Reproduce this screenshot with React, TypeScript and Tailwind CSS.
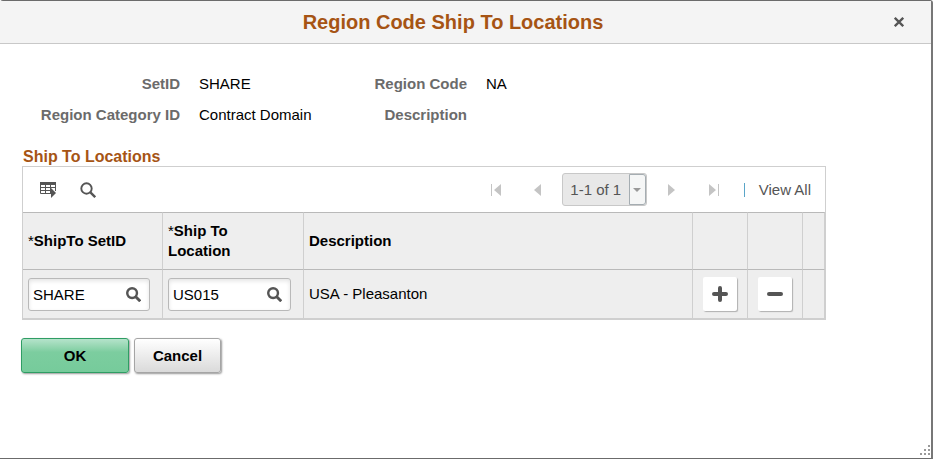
import type { ReactNode } from "react";

const fields = [
  { label: "SetID", value: "SHARE" },
  { label: "Region Code", value: "NA" },
  { label: "Region Category ID", value: "Contract Domain" },
  { label: "Description", value: "" }
];

function SearchIcon({ className, weight }: { className: string; weight: number }) {
  return (
    <svg className={className} viewBox="0 0 16 16" fill="none" stroke="#555" aria-hidden="true">
      <circle cx="6.5" cy="6.5" r="5.2" strokeWidth={weight} />
      <path d="M10.4 10.4 15.2 15.2" strokeWidth={weight + 0.5} />
    </svg>
  );
}

function GridActionIcon() {
  return (
    <svg className="h-4 w-4.5" viewBox="0 0 18 16" aria-hidden="true">
      <path d="M0 0h16v3H0z" fill="#555" />
      <path d="M.5 2v9.5H10M.5 5.5h15M.5 8.5H11M5.5 3v9M10.5 3v9M15.5 3v6" stroke="#555" fill="none" />
      <path d="M11 6v10l5-5z" fill="#555" />
    </svg>
  );
}

function PagerButton({ label, className, children }: { label: string; className: string; children: ReactNode }) {
  return (
    <button type="button" aria-label={label} className={`flex h-8 shrink-0 items-center justify-center ${className}`}>
      <svg className="h-3.5 w-3" viewBox="0 0 12 14" fill="#c4c4c4" aria-hidden="true">
        {children}
      </svg>
    </button>
  );
}

function LookupField({ id, label, value }: { id: string; label: string; value: string }) {
  return (
    <div className="flex h-[33px] items-center rounded-[3px] border border-[#b9b9b9] bg-white pr-2 shadow-[inset_0_2px_4px_#e4e4e4]">
      <input
        id={id}
        aria-label={label}
        defaultValue={value}
        className="h-full min-w-0 flex-1 bg-transparent pl-1 text-black outline-none"
      />
      <button type="button" aria-label={`Look up ${label}`}>
        <SearchIcon className="size-[15px]" weight={2.6} />
      </button>
    </div>
  );
}

function RowButton({ label, path }: { label: string; path: string }) {
  return (
    <button
      type="button"
      aria-label={label}
      className="mx-auto flex size-[34px] items-center justify-center rounded-xs bg-white shadow-[1px_1px_1px_#b0b0b0]"
    >
      <svg className="size-4" viewBox="0 0 16 16" stroke="#555" strokeWidth="4" strokeLinecap="round" aria-hidden="true">
        <path d={path} />
      </svg>
    </button>
  );
}

function Toolbar() {
  return (
    <div className="flex h-[45px] items-center justify-between pr-3.5 pl-[17px]">
      <div className="flex items-center gap-[22px]">
        <button type="button" aria-label="Grid actions">
          <GridActionIcon />
        </button>
        <button type="button" aria-label="Find">
          <SearchIcon className="size-4" weight={1.9} />
        </button>
      </div>
      <div className="flex items-center text-[#555]">
        <PagerButton label="First row" className="w-10">
          <path d="M0 1h1v12H0zM10 1v12L3 7z" />
        </PagerButton>
        <PagerButton label="Previous row" className="w-10">
          <path d="M10 1v12L3 7z" />
        </PagerButton>
        <div className="mx-[5px] flex h-[33px] w-[85px] rounded-[3px] border border-[#c8c8c8] bg-[#e8e8e8]">
          <span className="flex flex-1 items-center justify-center whitespace-nowrap">1-1 of 1</span>
          <button
            type="button"
            aria-label="Choose rows"
            className="flex w-[17px] items-center justify-center rounded-r-[3px] border border-[#a5adb2] bg-[#f5f6f6]"
          >
            <svg className="h-1 w-2" viewBox="0 0 8 4" fill="#999" aria-hidden="true">
              <path d="M0 0h8L4 4z" />
            </svg>
          </button>
        </div>
        <PagerButton label="Next row" className="w-10">
          <path d="M2 1v12l7-6z" />
        </PagerButton>
        <PagerButton label="Last row" className="w-11">
          <path d="M1 1v12l7-6zM10 1h1v12h-1z" />
        </PagerButton>
        <span className="mr-3.5 ml-2 h-3.5 w-px bg-[#5aa5c8]" />
        <a href="#all" className="whitespace-nowrap">
          View All
        </a>
      </div>
    </div>
  );
}

export default function App() {
  const headCell = "h-[58px] border-y border-r border-t-[#b9b9b9] border-r-[#cfcfcf] border-b-[#b9b9b9] px-[5px] text-left";
  const bodyCell = "h-12 border-r border-[#cfcfcf] px-[5px]";

  return (
    <main
      role="dialog"
      aria-labelledby="dialog-title"
      className="relative flex min-h-screen flex-col rounded-t-[3px] border-t border-r-2 border-b border-[#6b6b6b] border-r-[#777] bg-white font-['Liberation_Sans',Arial,sans-serif] text-[15px] leading-5 text-black"
    >
      <header className="flex h-[43px] items-center border-b border-[#c8c8c8] bg-[#f4f4f4] pr-[25px]">
        <h1 id="dialog-title" className="flex-1 text-center text-xl font-bold text-[#a65414]">
          Region Code Ship To Locations
        </h1>
        <button type="button" aria-label="Close" className="-ml-3.5 p-0.5">
          <svg className="size-2.5" viewBox="0 0 10 10" stroke="#555" strokeWidth="2.3" aria-hidden="true">
            <path d="M.8.8 9.2 9.2M9.2.8.8 9.2" />
          </svg>
        </button>
      </header>

      <dl className="mt-[30px] grid grid-cols-[180px_156px_131px_1fr] gap-y-[11px]">
        {fields.map(({ label, value }) => (
          <div key={label} className="contents">
            <dt className="text-right font-bold whitespace-nowrap text-[#6b6b6b]">{label}</dt>
            <dd className="pl-[19px] whitespace-nowrap">{value}</dd>
          </div>
        ))}
      </dl>

      <section className="mt-[22px] mr-[105px] ml-[22px]">
        <h2 className="pl-px text-base leading-[19px] font-bold text-[#a65414]">Ship To Locations</h2>
        <div className="border border-b-2 border-[#cfcfcf]">
          <Toolbar />
          <table className="w-full table-fixed border-separate border-spacing-0 bg-[#eeeeee]">
            <colgroup>
              <col className="w-[140px]" />
              <col className="w-[141px]" />
              <col />
              <col className="w-[55px]" />
              <col className="w-[55px]" />
              <col className="w-[22px]" />
            </colgroup>
            <thead>
              <tr>
                <th scope="col" className={headCell}>
                  <span className="font-normal">*</span>ShipTo SetID
                </th>
                <th scope="col" className={headCell}>
                  <span className="font-normal">*</span>Ship To
                  <br />
                  Location
                </th>
                <th scope="col" className={headCell}>Description</th>
                <th scope="col" className={headCell} aria-label="Add" />
                <th scope="col" className={headCell} aria-label="Delete" />
                <th scope="col" className={headCell} aria-label="End" />
              </tr>
            </thead>
            <tbody>
              <tr>
                <td className={`${bodyCell} pr-3`}>
                  <LookupField id="ship-to-setid" label="ShipTo SetID" value="SHARE" />
                </td>
                <td className={`${bodyCell} pr-3`}>
                  <LookupField id="ship-to-location" label="Ship To Location" value="US015" />
                </td>
                <td className={bodyCell}>USA - Pleasanton</td>
                <td className={bodyCell}>
                  <RowButton label="Add a row" path="M2 8h12M8 2v12" />
                </td>
                <td className={bodyCell}>
                  <RowButton label="Delete row" path="M2 8h12" />
                </td>
                <td className={bodyCell} />
              </tr>
            </tbody>
          </table>
        </div>
      </section>

      <div className="mt-[18px] ml-[21px] flex gap-[5px] font-bold">
        <button
          type="button"
          className="h-[35px] w-[108px] rounded-[3px] border border-[#2f9d64] bg-linear-to-b from-[#b5e3cb] via-[#7ccd9f] via-40% to-[#76cb9b] shadow-[1px_1px_2px_#999]"
        >
          OK
        </button>
        <button
          type="button"
          className="h-[35px] w-[87px] rounded-[3px] border border-[#a5a5a5] bg-linear-to-b from-white to-[#dadada] shadow-[1px_1px_2px_#999]"
        >
          Cancel
        </button>
      </div>

      <svg className="absolute right-px bottom-[3px] size-2.5" viewBox="0 0 10 10" fill="#999" aria-hidden="true">
        <path d="M8 0h2v2H8zM4 4h2v2H4zM8 4h2v2H8zM0 8h2v2H0zM4 8h2v2H4zM8 8h2v2H8z" />
      </svg>
    </main>
  );
}
